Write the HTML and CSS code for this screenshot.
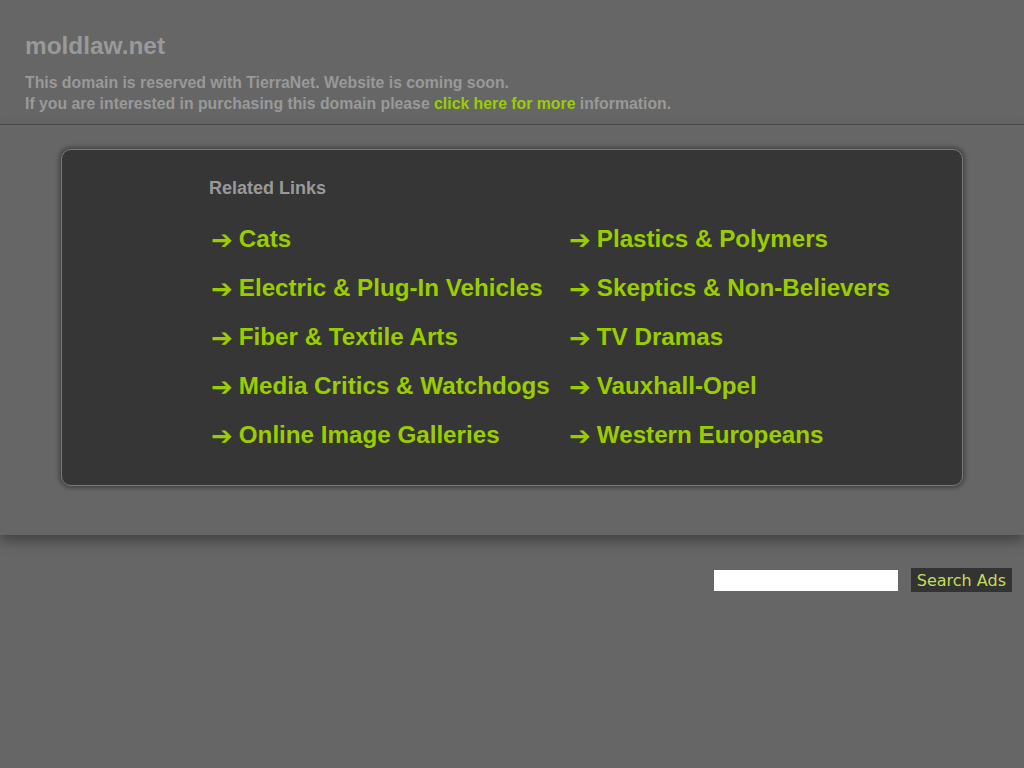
FILE: index.html
```html
<!DOCTYPE html>
<html>
<head>
<meta charset="utf-8">
<title>moldlaw.net</title>
<link rel="stylesheet" href="styles.css">
</head>
<body>
<div class="header">
  <h1 class="title">moldlaw.net</h1>
  <p class="info">This domain is reserved with TierraNet. Website is coming soon.<br>If you are interested in purchasing this domain please <a class="more" href="#">click here for more</a> information.</p>
</div>
<div class="band">
  <div class="box">
    <div class="links">
      <h2 class="related">Related Links</h2>
      <div class="grid">
        <a class="link" href="#"><span class="arrow">➔</span>Cats</a>
        <a class="link" href="#"><span class="arrow">➔</span>Plastics &amp; Polymers</a>
        <a class="link" href="#"><span class="arrow">➔</span>Electric &amp; Plug-In Vehicles</a>
        <a class="link" href="#"><span class="arrow">➔</span>Skeptics &amp; Non-Believers</a>
        <a class="link" href="#"><span class="arrow">➔</span>Fiber &amp; Textile Arts</a>
        <a class="link" href="#"><span class="arrow">➔</span>TV Dramas</a>
        <a class="link" href="#"><span class="arrow">➔</span>Media Critics &amp; Watchdogs</a>
        <a class="link" href="#"><span class="arrow">➔</span>Vauxhall-Opel</a>
        <a class="link" href="#"><span class="arrow">➔</span>Online Image Galleries</a>
        <a class="link" href="#"><span class="arrow">➔</span>Western Europeans</a>
      </div>
    </div>
  </div>
</div>
<div class="search">
  <input class="search-input" type="text">
  <button class="search-btn" type="button">Search Ads</button>
</div>
</body>
</html>
```
FILE: styles.css
```css
html, body {
  margin: 0;
  padding: 0;
  background: #666666;
  font-family: "Liberation Sans", Arial, sans-serif;
}
.header {
  padding: 32px 25px 10px 25px;
  height: 82px;
  border-bottom: 1px solid #4a4a4a;
}
.title {
  margin: 0;
  font-size: 24.4px;
  font-weight: bold;
  color: #999999;
  line-height: 28px;
}
.info {
  margin: 12px 0 0 0;
  font-size: 15.8px;
  font-weight: bold;
  color: #999999;
  line-height: 21px;
}
.more {
  color: #9acd00;
  text-decoration: none;
}
.band {
  padding: 24px 61px 49px 61px;
  box-shadow: 0 6px 12px rgba(0, 0, 0, 0.35);
  position: relative;
}
.box {
  background: #363636;
  border: 1px solid #7a7a7a;
  border-radius: 10px;
  height: 335px;
  box-shadow: 0 0 4px 2px rgba(0, 0, 0, 0.35);
  padding-left: 147px;
}
.related {
  margin: 0;
  padding-top: 28px;
  font-size: 18px;
  font-weight: bold;
  color: #999999;
  line-height: 20px;
}
.grid {
  display: grid;
  grid-template-columns: 358px auto;
  grid-auto-rows: 28px;
  margin-top: 27px;
  row-gap: 21px;
}
.link {
  display: flex;
  align-items: center;
  color: #9acd00;
  font-size: 24.2px;
  font-weight: bold;
  text-decoration: none;
  line-height: 28px;
  white-space: nowrap;
}
.arrow {
  font-family: "DejaVu Sans", sans-serif;
  font-size: 26px;
  line-height: 28px;
  margin-left: 2px;
  margin-right: 6px;
  position: relative;
  top: 1px;
}
.search {
  display: flex;
  justify-content: flex-end;
  align-items: center;
  padding: 33px 12px 0 0;
  gap: 13px;
}
.search-input {
  width: 184px;
  height: 21px;
  border: none;
  background: #ffffff;
  padding: 0;
  margin: 0;
}
.search-btn {
  background: #333333;
  color: #c4dc5c;
  border: none;
  font-family: "DejaVu Sans", sans-serif;
  font-size: 16px;
  height: 24px;
  padding: 0 6px;
  margin: 0;
}
```
